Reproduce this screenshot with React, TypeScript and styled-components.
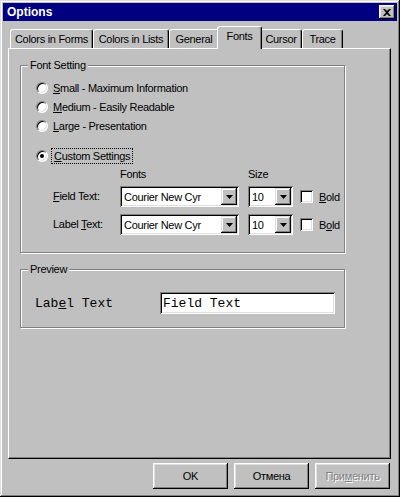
import React from 'react'
import styled, { createGlobalStyle } from 'styled-components'

const GlobalStyle = createGlobalStyle`
  html, body {
    margin: 0;
    padding: 0;
    background: #c0c0c0;
  }
  body {
    font-family: "Liberation Sans", Arial, sans-serif;
    font-size: 11px;
    letter-spacing: -0.3px;
    color: #000;
  }
`

const Window = styled.div`
  width: 400px;
  height: 497px;
  box-sizing: border-box;
  padding: 3px;
  display: flex;
  flex-direction: column;
  background: #c0c0c0;
  box-shadow: inset -1px -1px #000, inset 1px 1px #dfdfdf, inset -2px -2px #808080,
    inset 2px 2px #fff;
`

const TitleBar = styled.div`
  height: 18px;
  display: flex;
  align-items: center;
  justify-content: space-between;
  padding: 0 2px;
  background: #000080;
  color: #fff;
  font-weight: bold;
  font-size: 12px;
  letter-spacing: 0;
`

const CloseButton = styled.div`
  width: 16px;
  height: 14px;
  display: flex;
  align-items: center;
  justify-content: center;
  background: #c0c0c0;
  box-shadow: inset -1px -1px #000, inset 1px 1px #fff, inset -2px -2px #808080,
    inset 2px 2px #dfdfdf;
`

const Body = styled.div`
  display: flex;
  flex-direction: column;
  padding: 5px 6px 0 5px;
`

const TabStrip = styled.div`
  height: 22px;
  display: flex;
  align-items: flex-end;
  padding-left: 2px;
  position: relative;
  z-index: 1;
`

const Tab = styled.div<{ $w: number; $active?: boolean }>`
  box-sizing: border-box;
  width: ${(p) => p.$w}px;
  height: ${(p) => (p.$active ? 23 : 19)}px;
  margin: ${(p) => (p.$active ? '0 -2px -1px -2px' : '0')};
  padding-top: ${(p) => (p.$active ? 3 : 3)}px;
  text-align: center;
  white-space: nowrap;
  background: #c0c0c0;
  border-top: 1px solid #fff;
  border-left: 1px solid #fff;
  border-right: 1px solid #000;
  border-radius: 3px 3px 0 0;
  box-shadow: inset -1px 0 #808080;
  position: relative;
  z-index: ${(p) => (p.$active ? 2 : 0)};
`

const Panel = styled.div`
  box-sizing: border-box;
  height: 411px;
  display: flex;
  flex-direction: column;
  padding: 16px 0 0 11px;
  border-top: 1px solid #fff;
  border-left: 1px solid #fff;
  border-right: 1px solid #000;
  border-bottom: 1px solid #000;
  box-shadow: inset -1px -1px #808080;
`

const Group = styled.div<{ $h: number }>`
  box-sizing: border-box;
  width: 325px;
  height: ${(p) => p.$h}px;
  margin-bottom: 16px;
  position: relative;
  border: 1px solid #808080;
  box-shadow: inset 1px 1px #fff, 1px 1px #fff;
`

const Caption = styled.span`
  position: absolute;
  top: -8px;
  left: 7px;
  padding: 0 2px;
  background: #c0c0c0;
  line-height: 14px;
`

const RadioList = styled.div`
  display: flex;
  flex-direction: column;
  padding: 12px 0 0 15px;
`

const RadioRow = styled.div<{ $gap?: number }>`
  height: 19px;
  display: flex;
  align-items: center;
  gap: 5px;
  margin-top: ${(p) => p.$gap ?? 0}px;
`

const RadioDot = styled.span<{ $checked?: boolean }>`
  box-sizing: border-box;
  width: 12px;
  height: 12px;
  border-radius: 50%;
  background: #fff;
  border: 1px solid;
  border-color: #808080 #fff #fff #808080;
  box-shadow: inset 1px 1px #000, inset -1px -1px #dfdfdf;
  display: flex;
  align-items: center;
  justify-content: center;
  &::after {
    content: '';
    width: 4px;
    height: 4px;
    border-radius: 50%;
    background: #000;
    display: ${(p) => (p.$checked ? 'block' : 'none')};
  }
`

const Focus = styled.span`
  outline: 1px dotted #000;
  outline-offset: 1px;
  padding: 0 1px;
`

const FontGrid = styled.div`
  display: grid;
  grid-template-columns: 67px 128px 52px auto;
  grid-template-rows: 17px 28px 21px;
  align-items: start;
  margin: 4px 0 0 32px;
`

const Head = styled.div`
  line-height: 13px;
  margin-top: -1px;
`

const RowLabel = styled.div`
  line-height: 21px;
`

const Combo = styled.div<{ $w: number }>`
  box-sizing: border-box;
  width: ${(p) => p.$w}px;
  height: 21px;
  display: flex;
  align-items: center;
  justify-content: space-between;
  padding: 2px;
  background: #fff;
  box-shadow: inset 1px 1px #808080, inset -1px -1px #fff, inset 2px 2px #000,
    inset -2px -2px #dfdfdf;
`

const ComboText = styled.span`
  padding-left: 2px;
  white-space: nowrap;
`

const DropButton = styled.span`
  width: 16px;
  height: 17px;
  display: flex;
  align-items: center;
  justify-content: center;
  background: #c0c0c0;
  box-shadow: inset -1px -1px #000, inset 1px 1px #dfdfdf, inset -2px -2px #808080,
    inset 2px 2px #fff;
`

const CheckCell = styled.label`
  height: 21px;
  display: flex;
  align-items: center;
  gap: 6px;
`

const CheckBox = styled.span`
  width: 13px;
  height: 13px;
  box-sizing: border-box;
  background: #fff;
  box-shadow: inset 1px 1px #808080, inset -1px -1px #fff, inset 2px 2px #000,
    inset -2px -2px #dfdfdf;
`

const PreviewRow = styled.div`
  display: flex;
  align-items: center;
  padding: 22px 0 0 14px;
`

const PreviewLabel = styled.span`
  width: 125px;
  font-family: "Liberation Mono", "Courier New", monospace;
  font-size: 13px;
  letter-spacing: 0;
`

const PreviewField = styled.div`
  box-sizing: border-box;
  width: 175px;
  height: 22px;
  display: flex;
  align-items: center;
  padding: 0 3px;
  background: #fff;
  font-family: "Liberation Mono", "Courier New", monospace;
  font-size: 13px;
  letter-spacing: 0;
  box-shadow: inset 1px 1px #808080, inset -1px -1px #fff, inset 2px 2px #000,
    inset -2px -2px #dfdfdf;
`

const ButtonBar = styled.div`
  display: flex;
  justify-content: flex-end;
  gap: 6px;
  margin-top: 4px;
  margin-right: 1px;
`

const Button = styled.div<{ $disabled?: boolean }>`
  width: 75px;
  height: 26px;
  display: flex;
  align-items: center;
  justify-content: center;
  color: ${(p) => (p.$disabled ? '#808080' : '#000')};
  text-shadow: ${(p) => (p.$disabled ? '1px 1px 0 #fff' : 'none')};
  background: #c0c0c0;
  box-shadow: inset -1px -1px #000, inset 1px 1px #fff, inset -2px -2px #808080,
    inset 2px 2px #dfdfdf;
`

const Arrow = () => (
  <svg width="7" height="4" viewBox="0 0 7 4">
    <path d="M0 0h7L3.5 4z" fill="#000" />
  </svg>
)

const FontCombo = ({ w, text }: { w: number; text: string }) => (
  <Combo $w={w}>
    <ComboText>{text}</ComboText>
    <DropButton>
      <Arrow />
    </DropButton>
  </Combo>
)

const tabs = [
  { label: 'Colors in Forms', w: 83 },
  { label: 'Colors in Lists', w: 76 },
  { label: 'General', w: 50 },
  { label: 'Fonts', w: 45, active: true },
  { label: 'Cursor', w: 42 },
  { label: 'Trace', w: 41 },
]

export default function App() {
  return (
    <>
      <GlobalStyle />
      <Window>
        <TitleBar>
          <span style={{ paddingLeft: 2 }}>Options</span>
          <CloseButton>
            <svg width="8" height="7" viewBox="0 0 8 7">
              <path d="M0 0h2l2 2 2-2h2L5 3.5 8 7H6L4 5 2 7H0l3-3.5z" fill="#000" />
            </svg>
          </CloseButton>
        </TitleBar>
        <Body>
          <TabStrip>
            {tabs.map((t) => (
              <Tab key={t.label} $w={t.w} $active={t.active}>
                {t.label}
              </Tab>
            ))}
          </TabStrip>
          <Panel>
            <Group $h={188}>
              <Caption>Font Setting</Caption>
              <RadioList>
                <RadioRow>
                  <RadioDot />
                  <span>
                    <u>S</u>mall - Maximum Information
                  </span>
                </RadioRow>
                <RadioRow>
                  <RadioDot />
                  <span>
                    <u>M</u>edium - Easily Readable
                  </span>
                </RadioRow>
                <RadioRow>
                  <RadioDot />
                  <span>
                    <u>L</u>arge - Presentation
                  </span>
                </RadioRow>
                <RadioRow $gap={11}>
                  <RadioDot $checked />
                  <Focus>
                    <u>C</u>ustom Settings
                  </Focus>
                </RadioRow>
              </RadioList>
              <FontGrid>
                <span />
                <Head>Fonts</Head>
                <Head>Size</Head>
                <span />
                <RowLabel>
                  <u>F</u>ield Text:
                </RowLabel>
                <FontCombo w={119} text="Courier New Cyr" />
                <FontCombo w={45} text="10" />
                <CheckCell>
                  <CheckBox />
                  <span>
                    <u>B</u>old
                  </span>
                </CheckCell>
                <RowLabel>
                  Label <u>T</u>ext:
                </RowLabel>
                <FontCombo w={119} text="Courier New Cyr" />
                <FontCombo w={45} text="10" />
                <CheckCell>
                  <CheckBox />
                  <span>
                    B<u>o</u>ld
                  </span>
                </CheckCell>
              </FontGrid>
            </Group>
            <Group $h={59}>
              <Caption>Preview</Caption>
              <PreviewRow>
                <PreviewLabel>
                  Lab<u>e</u>l Text
                </PreviewLabel>
                <PreviewField>Field Text</PreviewField>
              </PreviewRow>
            </Group>
          </Panel>
          <ButtonBar>
            <Button>OK</Button>
            <Button>Отмена</Button>
            <Button $disabled>
              <span>
                При<u>м</u>енить
              </span>
            </Button>
          </ButtonBar>
        </Body>
      </Window>
    </>
  )
}
